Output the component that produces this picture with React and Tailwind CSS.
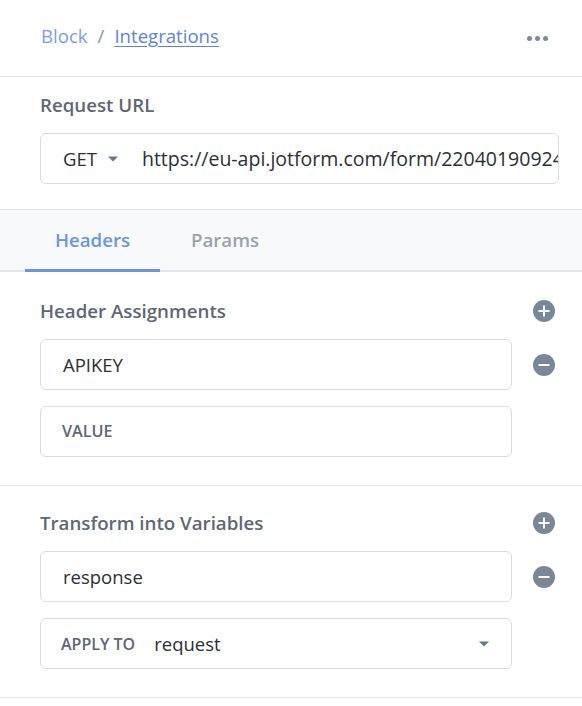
const PlusIcon = () => (
  <svg width="22" height="22" viewBox="0 0 22 22">
    <circle cx="11" cy="11" r="11" fill="#7a8798" />
    <path d="M11 5.5v11M5.5 11h11" stroke="#fff" strokeWidth="2" />
  </svg>
);

const MinusIcon = () => (
  <svg width="22" height="22" viewBox="0 0 22 22">
    <circle cx="11" cy="11" r="11" fill="#7a8798" />
    <path d="M5.5 11h11" stroke="#fff" strokeWidth="2" />
  </svg>
);

const Caret = () => (
  <svg width="12" height="8" viewBox="0 0 12 8" className="shrink-0">
    <path d="M1 1.5h10L6 6.5z" fill="#6b7686" />
  </svg>
);

const Field = ({ children, className = "" }) => (
  <div
    className={`h-[51px] flex items-center border border-[#d8dce3] rounded-md bg-white px-[21px] ${className}`}
  >
    {children}
  </div>
);

const App = () => {
  return (
    <div
      className="w-[582px] h-[706px] bg-white text-[#2b2f36]"
      style={{ fontFamily: '"Open Sans", sans-serif' }}
    >
      <div className="h-[77px] flex items-center justify-between pl-[41px] pr-[34px] pb-[4px] border-b border-[#e3e6eb]">
        <div className="flex items-center text-[18.6px] leading-[28px]">
          <span className="text-[#7d9ee2]">Block</span>
          <span className="text-[#8a93a0] mx-[10px]">/</span>
          <span className="text-[#5f84d6] underline underline-offset-[3px]">Integrations</span>
        </div>
        <div className="flex gap-[3px] pt-[4px]">
          <span className="w-[5px] h-[5px] rounded-full bg-[#7e8a9b]" />
          <span className="w-[5px] h-[5px] rounded-full bg-[#7e8a9b]" />
          <span className="w-[5px] h-[5px] rounded-full bg-[#7e8a9b]" />
        </div>
      </div>

      <div className="px-[40px] pt-[14px] pb-[25px] border-b border-[#e3e6eb]">
        <div className="text-[18.7px] leading-[27px] font-semibold text-[#5d6775] mb-[15px]">Request URL</div>
        <div className="h-[51px] w-[519px] flex items-center border border-[#d8dce3] rounded-md bg-white pl-[22px] overflow-hidden">
          <span className="shrink-0 text-[18.5px] text-[#2b2f36] mr-[10px]">GET</span>
          <Caret />
          <input
            readOnly
            value="https://eu-api.jotform.com/form/220401909245"
            className="ml-[23px] min-w-0 flex-1 bg-transparent outline-none text-[19.5px] text-[#2b2f36]"
            style={{ fontFamily: '"Open Sans", sans-serif' }}
          />
        </div>
      </div>

      <div className="h-[62px] bg-[#f8f9fb] flex items-end pl-[25px] border-b-2 border-[#e4e7ed]">
        <div className="w-[135px] h-[60px] flex items-center justify-center text-[18.7px] font-semibold text-[#6b95e0] border-b-[3px] border-[#6b95e0] -mb-[2px]">
          Headers
        </div>
        <div className="w-[130px] h-[60px] flex items-center justify-center text-[18.7px] font-semibold text-[#9aa2ad]">
          Params
        </div>
      </div>

      <div className="pl-[40px] pr-[27px] pt-[25px] pb-[28px] border-b border-[#e3e6eb]">
        <div className="flex items-center justify-between mb-[15px]">
          <span className="text-[18.7px] leading-[27px] font-semibold text-[#5d6775]">Header Assignments</span>
          <PlusIcon />
        </div>
        <div className="flex flex-col gap-[16px]">
          <div className="flex items-center justify-between">
            <Field className="w-[472px] pl-[22px]">
              <span className="text-[18.5px] text-[#2b2f36]">APIKEY</span>
            </Field>
            <MinusIcon />
          </div>
          <div className="flex items-center">
            <Field className="w-[472px] px-[20px]">
              <span className="text-[16.2px] font-semibold text-[#5d6775]">VALUE</span>
            </Field>
          </div>
        </div>
      </div>

      <div className="pl-[40px] pr-[27px] pt-[23px] pb-[28px] border-b border-[#e3e6eb]">
        <div className="flex items-center justify-between mb-[15px]">
          <span className="text-[18.7px] leading-[27px] font-semibold text-[#5d6775]">Transform into Variables</span>
          <PlusIcon />
        </div>
        <div className="flex flex-col gap-[16px]">
          <div className="flex items-center justify-between">
            <Field className="w-[472px] pl-[22px]">
              <span className="text-[18.5px] text-[#2b2f36]">response</span>
            </Field>
            <MinusIcon />
          </div>
          <div className="flex items-center">
            <Field className="w-[472px] pl-[20px] pr-[21px] justify-between">
              <div className="flex items-center">
                <span className="text-[16px] font-semibold text-[#5d6775]">APPLY TO</span>
                <span className="ml-[19px] text-[18.5px] text-[#2b2f36]">request</span>
              </div>
              <Caret />
            </Field>
          </div>
        </div>
      </div>
    </div>
  );
};

export default App;
